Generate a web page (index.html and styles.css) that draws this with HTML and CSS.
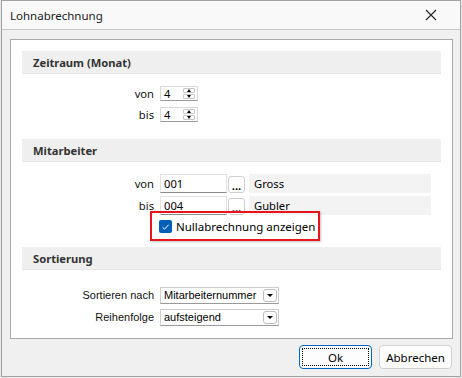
FILE: index.html
```html
<!DOCTYPE html>
<html lang="de">
<head>
  <meta charset="UTF-8">
  <title>Lohnabrechnung</title>
  <link rel="stylesheet" href="styles.css">
</head>
<body>
  <div id="fenster">
    <div id="titel">
      <span>Lohnabrechnung</span>
      <svg class="schliessen" width="12" height="12" viewBox="0 0 12 12">
        <path d="M1 1 L11 11 M11 1 L1 11" stroke="#222" stroke-width="1.1" fill="none"/>
      </svg>
    </div>

    <div id="inhalt">
      <div id="rahmen">
        <div class="kopf">Zeitraum (Monat)</div>
        <div class="zeilen zeitraum">
          <div class="zeile">
            <span class="label">von</span>
            <div class="spin"><span>4</span><div class="pfeile"><i class="auf"></i><i class="ab"></i></div></div>
          </div>
          <div class="zeile">
            <span class="label">bis</span>
            <div class="spin"><span>4</span><div class="pfeile"><i class="auf"></i><i class="ab"></i></div></div>
          </div>
        </div>

        <div class="kopf">Mitarbeiter</div>
        <div class="zeilen mitarbeiter">
          <div class="zeile">
            <span class="label">von</span>
            <div class="eingabe">001</div>
            <div class="punkte">...</div>
            <div class="name">Gross</div>
          </div>
          <div class="zeile">
            <span class="label">bis</span>
            <div class="eingabe">004</div>
            <div class="punkte">...</div>
            <div class="name">Gubler</div>
          </div>
          <div class="zeile check">
            <span class="label"></span>
            <div class="markiert">
              <span class="kasten">
                <svg width="9" height="8" viewBox="0 0 9 8"><path d="M1.5 4.2 L3.6 6.2 L7.6 1.8" stroke="#fff" stroke-width="1" fill="none"/></svg>
              </span>
              <span>Nullabrechnung anzeigen</span>
            </div>
          </div>
        </div>

        <div class="kopf">Sortierung</div>
        <div class="zeilen sortierung">
          <div class="zeile">
            <span class="label">Sortieren nach</span>
            <div class="combo"><span>Mitarbeiternummer</span><i class="knopf"></i></div>
          </div>
          <div class="zeile">
            <span class="label">Reihenfolge</span>
            <div class="combo"><span>aufsteigend</span><i class="knopf"></i></div>
          </div>
        </div>
      </div>

      <div id="knoepfe">
        <button class="taste fokus"><span>Ok</span></button>
        <button class="taste">Abbrechen</button>
      </div>
    </div>
  </div>
</body>
</html>
```

FILE: styles.css
```css
html, body {
  margin: 0;
  padding: 0;
  background: #e8e8e8;
  font-family: "Noto Sans", sans-serif;
  font-size: 11.2px;
  color: #000;
}

#fenster {
  margin-left: 1px;
  width: 460px;
  height: 377px;
  box-sizing: border-box;
  border: 1px solid #a3a3a3;
  background: #f0f0f0;
  display: flex;
  flex-direction: column;
}

#titel {
  height: 28px;
  border-bottom: 1px solid #c9c9c9;
  background: #f9f9f9;
  display: flex;
  align-items: center;
  justify-content: space-between;
  padding: 0 23px 0 8px;
  font-size: 11.5px;
  color: #1a1a1a;
}

#inhalt {
  flex: 1;
  display: flex;
  flex-direction: column;
}

#rahmen {
  margin: 9px 0 0 8px;
  width: 443px;
  height: 300px;
  box-sizing: border-box;
  border: 1px solid #a9a9a9;
  background: #fff;
  padding: 11px 11px 0 11px;
}

.kopf {
  height: 23px;
  box-sizing: border-box;
  background: #efefef;
  border-bottom: 1px solid #e6e6e6;
  padding-left: 11px;
  display: flex;
  align-items: center;
  font-weight: bold;
  color: #333;
}

.zeilen {
  display: flex;
  flex-direction: column;
}

.zeitraum { margin: 12px 0 17px; gap: 6px; }
.mitarbeiter { margin: 12px 0 14px; gap: 3px; }
.sortierung { margin-top: 17px; gap: 5px; }

.zeile {
  display: flex;
  align-items: center;
  line-height: 13px;
}

.zeitraum .zeile { height: 15px; }
.mitarbeiter .zeile { height: 19px; }
.mitarbeiter .check { height: 13px; }
.sortierung .zeile { height: 17px; }

.label {
  width: 132px;
  margin-right: 6px;
  text-align: right;
  color: #111;
}

.sortierung .label {
  font-family: "Liberation Sans", sans-serif;
  font-size: 11px;
}

/* Zahlenfeld mit Pfeilen */
.spin {
  width: 38px;
  height: 15px;
  box-sizing: border-box;
  border: 1px solid #d9d9d9;
  border-bottom-color: #9a9a9a;
  display: flex;
  align-items: center;
  justify-content: space-between;
  padding: 0 2px 0 3px;
}

.pfeile {
  display: flex;
  flex-direction: column;
  gap: 1px;
}

.pfeile i {
  width: 12px;
  height: 5px;
  box-sizing: border-box;
  border: 1px solid #c8c8c8;
  border-radius: 1px;
  position: relative;
}

.pfeile i::after {
  content: "";
  position: absolute;
  left: 3px;
  border-left: 2.5px solid transparent;
  border-right: 2.5px solid transparent;
}

.pfeile .auf::after { top: 0; border-bottom: 3px solid #000; }
.pfeile .ab::after { top: 0; border-top: 3px solid #000; }

/* Mitarbeiterfelder */
.eingabe {
  width: 67px;
  height: 19px;
  box-sizing: border-box;
  border: 1px solid #e3e3e3;
  border-bottom-color: #8a8a8a;
  padding-left: 3px;
  display: flex;
  align-items: center;
}

.punkte {
  width: 17px;
  height: 17px;
  margin: 2px 4px 0 1px;
  box-sizing: border-box;
  border: 1px solid #cfcfcf;
  border-radius: 3px;
  display: flex;
  align-items: flex-end;
  justify-content: center;
  font-weight: bold;
  line-height: 12px;
  overflow: hidden;
}

.name {
  width: 182px;
  height: 19px;
  box-sizing: border-box;
  background: #f3f3f3;
  padding-left: 5px;
  display: flex;
  align-items: center;
}

.check {
  margin-top: 2px;
}

.markiert {
  position: relative;
  margin-left: -1px;
  display: flex;
  align-items: center;
  gap: 4px;
  height: 13px;
  font-size: 11.5px;
}

.markiert::after {
  content: "";
  position: absolute;
  left: -9px;
  top: -9px;
  width: 170px;
  height: 30px;
  box-sizing: border-box;
  border: 2px solid #e8141c;
  box-shadow: 1px 1px 2px rgba(0, 0, 0, 0.25);
}

.kasten {
  width: 13px;
  height: 13px;
  border-radius: 2px;
  background: #005fb8;
  display: flex;
  align-items: center;
  justify-content: center;
}

/* Auswahlfelder */
.combo {
  width: 119px;
  height: 17px;
  box-sizing: border-box;
  border: 1px solid #cdcdcd;
  border-bottom-color: #9a9a9a;
  display: flex;
  align-items: center;
  justify-content: space-between;
  padding: 0 1px 0 3px;
  font-family: "Liberation Sans", sans-serif;
  font-size: 11px;
}

.knopf {
  width: 14px;
  height: 13px;
  box-sizing: border-box;
  border: 1px solid #bdbdbd;
  border-radius: 3px;
  position: relative;
}

.knopf::after {
  content: "";
  position: absolute;
  left: 3px;
  top: 4px;
  border-left: 3px solid transparent;
  border-right: 3px solid transparent;
  border-top: 3px solid #000;
}

#knoepfe {
  display: flex;
  justify-content: flex-end;
  gap: 7px;
  padding: 6px 8px 0 0;
}

.taste {
  width: 73px;
  height: 24px;
  border: 1px solid #d0d0d0;
  border-radius: 4px;
  background: #fdfdfd;
  font-family: "Noto Sans", sans-serif;
  font-size: 11.5px;
  color: #000;
  padding: 0;
}

.fokus {
  border-color: #0067c0;
  padding: 2px;
}

.fokus span {
  display: flex;
  height: 100%;
  box-sizing: border-box;
  border: 1px dotted #000;
  align-items: center;
  justify-content: center;
}
```
